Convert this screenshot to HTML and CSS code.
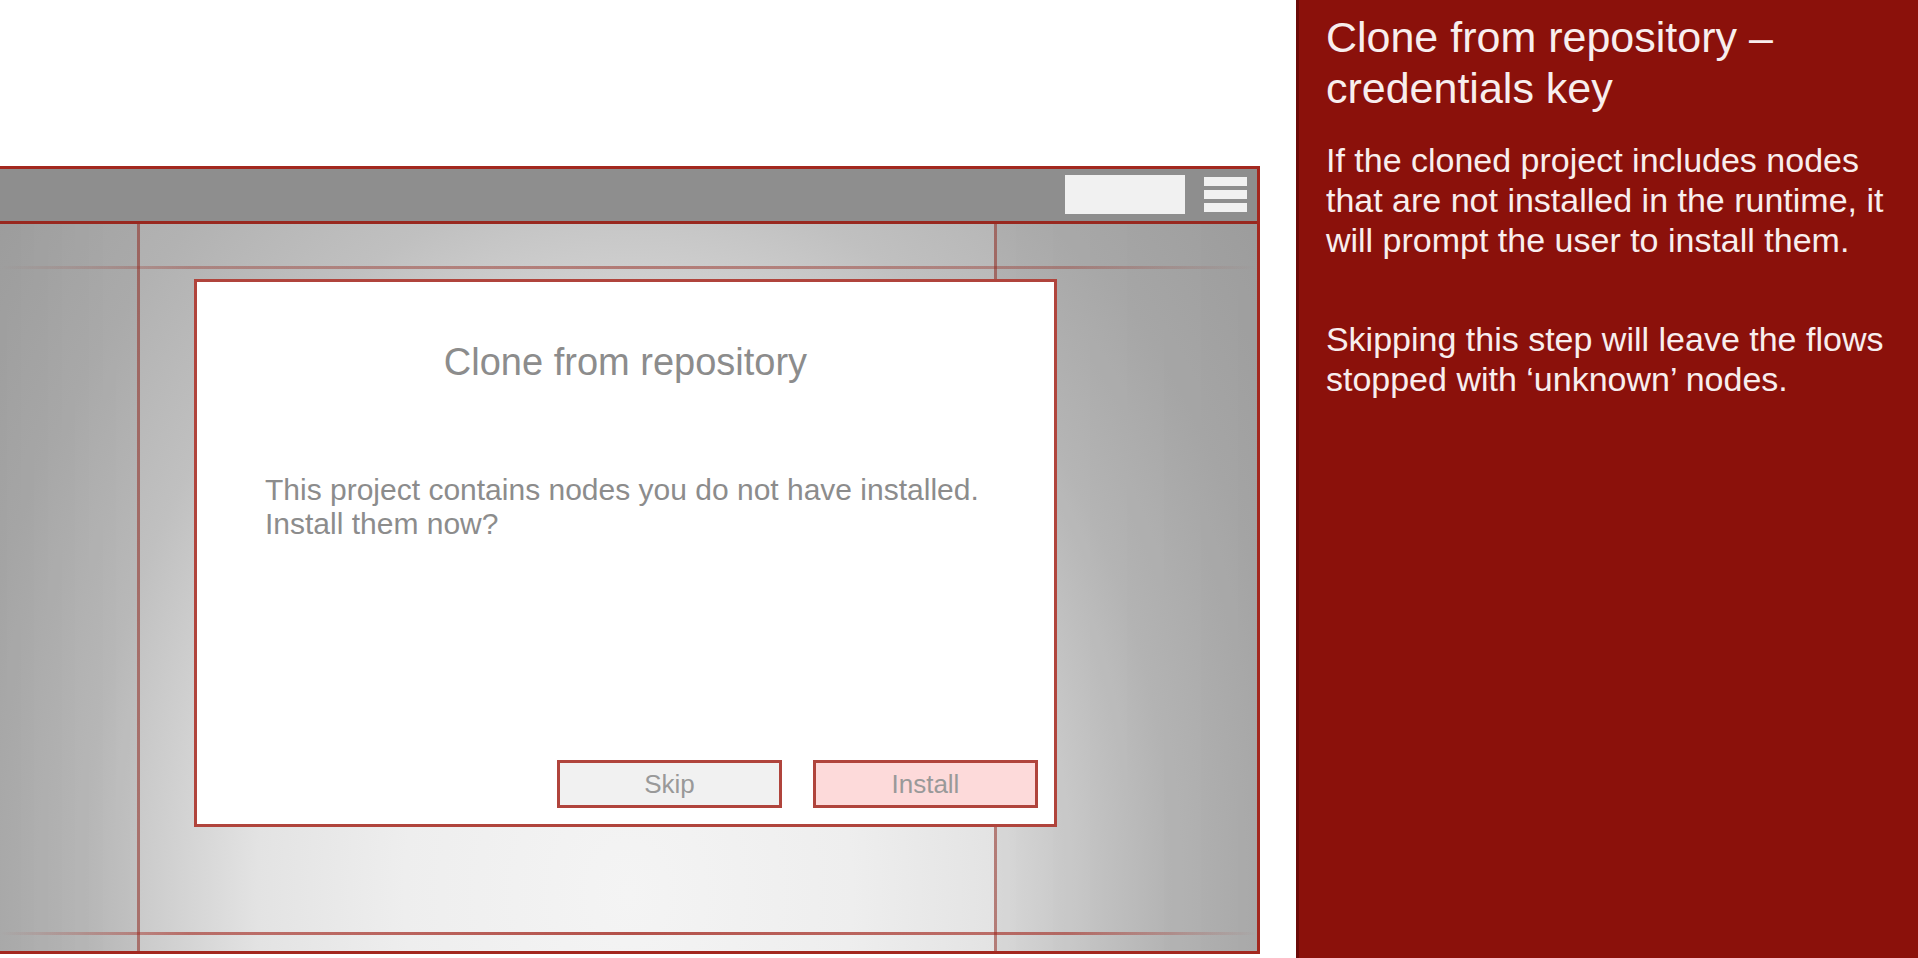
FILE: index.html
```html
<!DOCTYPE html>
<html lang="en">
<head>
<meta charset="utf-8">
<title>Clone from repository</title>
<link rel="stylesheet" href="styles.css">
</head>
<body>
<div class="slide">
  <main class="stage">
    <div class="editor">
      <header class="toolbar">
        <button class="deploy" type="button" aria-label="Deploy"></button>
        <button class="menu" type="button" aria-label="Menu">
          <span class="menu-bar"></span>
          <span class="menu-bar"></span>
          <span class="menu-bar"></span>
        </button>
      </header>
      <div class="workspace">
        <div class="palette"></div>
        <div class="sidebar"></div>
        <div class="tabs"></div>
        <div class="footer"></div>
        <section class="dialog" role="dialog" aria-labelledby="dialog-title">
          <h2 class="dialog-title" id="dialog-title">Clone from repository</h2>
          <p class="dialog-text">This project contains nodes you do not have installed. Install them now?</p>
          <div class="dialog-actions">
            <button class="button" type="button">Skip</button>
            <button class="button button-primary" type="button">Install</button>
          </div>
        </section>
      </div>
    </div>
  </main>
  <aside class="notes">
    <h1 class="notes-title">Clone from repository – credentials key</h1>
    <p class="notes-text">If the cloned project includes nodes that are not installed in the runtime, it will prompt the user to install them.</p>
    <p class="notes-text">Skipping this step will leave the flows stopped with ‘unknown’ nodes.</p>
  </aside>
</div>
</body>
</html>
```
FILE: styles.css
```css
:root {
  --line: #a3281f;
  --line-soft: rgba(150, 40, 30, 0.5);
}

* {
  box-sizing: border-box;
}

body {
  margin: 0;
  background: #fff;
  font-family: "Liberation Sans", Arial, sans-serif;
}

h1,
h2,
p {
  margin: 0;
  font-weight: 400;
}

button {
  padding: 0;
  border: 0;
  font-family: inherit;
}

.slide {
  display: grid;
  grid-template-columns: 25fr 12fr;
  min-height: 100vh;
}

.stage {
  display: flex;
  padding: 166px 36px 4px 0;
}

.editor {
  display: flex;
  flex: 1;
  flex-direction: column;
  border: 3px solid var(--line);
  border-left: 0;
}

.toolbar {
  display: flex;
  align-items: center;
  justify-content: flex-end;
  gap: 19px;
  padding: 6px 10px 7px;
  border-bottom: 3px solid #98281f;
  background: #8e8e8e;
}

.deploy {
  width: 120px;
  height: 39px;
  background: #f1f1f1;
}

.menu {
  display: flex;
  flex-direction: column;
  gap: 4px;
  width: 43px;
  background: none;
}

.menu-bar {
  height: 9px;
  background: #f1f1f1;
}

.workspace {
  display: grid;
  flex: 1;
  grid-template-columns: 140px 1fr 263px;
  grid-template-rows: 45px 1fr 19px;
  background: radial-gradient(ellipse 640px 840px at 50% 92%, #f4f4f4 0%, #eeeeee 35%, #e3e3e3 58%, #cfcfcf 73%, #c0c0c0 85%, #b2b2b2 105%, #a8a8a8 130%);
}

.palette {
  grid-area: 1 / 1 / -1 / 2;
  border-right: 3px solid var(--line-soft);
  background: linear-gradient(to right, rgba(0, 0, 0, 0.08), rgba(0, 0, 0, 0.04));
}

.sidebar {
  grid-area: 1 / 3 / -1 / 4;
  border-left: 3px solid var(--line-soft);
  background: linear-gradient(to left, rgba(0, 0, 0, 0.08), rgba(0, 0, 0, 0.05));
}

.tabs,
.footer {
  grid-column: 1 / -1;
  height: 3px;
}

.tabs {
  grid-row: 1;
  align-self: end;
  background: linear-gradient(to right, transparent, rgba(150, 40, 30, 0.35) 15%, rgba(150, 40, 30, 0.5) 50%, rgba(150, 40, 30, 0.35) 85%, transparent);
}

.footer {
  grid-row: 3;
  background: linear-gradient(to right, transparent, rgba(163, 40, 31, 0.6) 15%, rgba(163, 40, 31, 0.8) 50%, rgba(163, 40, 31, 0.6) 85%, transparent);
}

.dialog {
  grid-area: 1 / 1 / -1 / -1;
  display: flex;
  flex-direction: column;
  margin: 55px 200px 124px 194px;
  padding: 58px 16px 16px;
  border: 3px solid #b0443c;
  background: #fff;
  color: #8c8c8c;
}

.dialog-title {
  font-size: 38px;
  line-height: 44px;
  text-align: center;
}

.dialog-text {
  margin-top: 89px;
  padding: 0 52px;
  font-size: 30px;
  line-height: 34px;
}

.dialog-actions {
  display: flex;
  justify-content: flex-end;
  gap: 31px;
  margin-top: auto;
}

.button {
  width: 225px;
  height: 48px;
  border: 3px solid #b0443c;
  background: #f1f1f1;
  color: #999;
  font-size: 26px;
}

.button-primary {
  background: #fddada;
}

.notes {
  padding: 12px 24px 24px 27px;
  border-left: 3px solid #6b0a08;
  background: #8b110b;
  color: #f8eeee;
}

.notes-title {
  margin-bottom: 26px;
  font-size: 43px;
  line-height: 51px;
}

.notes-text {
  margin-bottom: 59px;
  font-size: 34px;
  line-height: 40px;
}
```
